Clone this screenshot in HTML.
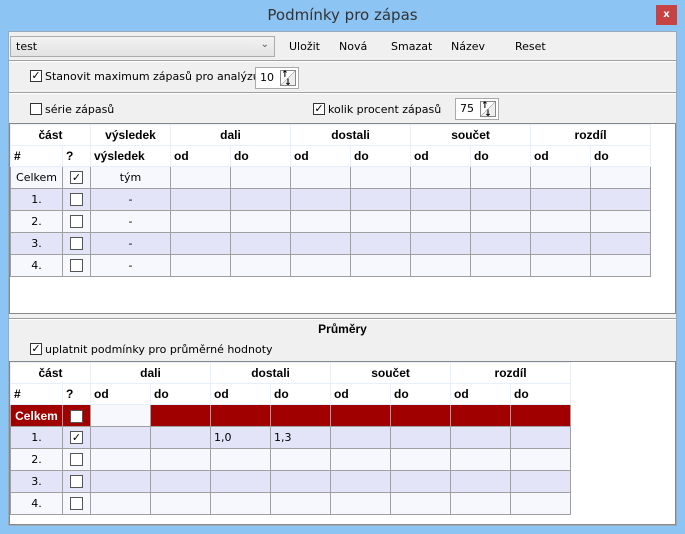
<!DOCTYPE html>
<html><head><meta charset="utf-8"><style>
*{margin:0;padding:0;box-sizing:border-box}
body{width:685px;height:534px;background:#8cc4f4;font-family:"DejaVu Sans","Liberation Sans",sans-serif;font-size:11px;color:#000;position:relative;overflow:hidden}
.a{position:absolute}
.win{left:8px;top:31px;width:669px;height:495px;background:#f0f0f0;border:1px solid #9ab}
.title{left:0;top:6px;width:685px;text-align:center;font-size:15px;color:#333;font-family:"DejaVu Sans",sans-serif}
.x{left:656px;top:5px;width:21px;height:20px;background:#c74343;color:#fff;font-size:10px;text-align:center;line-height:20px;font-weight:bold}
.hr{height:2px;border-top:1px solid #a0a0a0;border-bottom:1px solid #fff;left:9px;width:667px}
.cb{width:12px;height:12px;border:1px solid #333;background:#fff;font-size:11px;line-height:10px;text-align:center;font-weight:bold}
.spin{width:44px;height:22px;background:#fff;border:1px solid #aaa;padding:3px 4px;font-size:11px}
.spin span{position:absolute;right:2px;top:2px;width:16px;height:16px;border:1px solid #888;background:linear-gradient(135deg,#fff 48%,#888 50%,#eee 52%);font-size:9px;line-height:8px;font-weight:bold}
table{position:absolute;border-collapse:collapse;table-layout:fixed}
td{border:1px solid #a0a0a0;padding:0 3px;white-space:nowrap;overflow:hidden;text-align:center}
tr.h td{border:1px solid #e6f0fc;background:#fff;font-weight:bold;font-family:"Liberation Sans",sans-serif;font-size:12px}
tr.h2 td{text-align:left}
tr.w td{background:#f7f8fd}
tr.b td{background:#e4e4f8}
.ic{display:inline-block;width:13px;height:13px;border:1px solid #555;background:#fff;vertical-align:middle;font-size:11px;line-height:11px;font-weight:bold}
.box{border:1px solid #888;background:#fff}
</style></head><body>
<div class="a title">Podmínky pro zápas</div>
<div class="a x">x</div>
<div class="a win"></div>
<div class="a" style="left:10px;top:36px;width:265px;height:21px;border:1px solid #acacac;background:linear-gradient(#f2f2f2,#e3e3e3);padding:3px 5px">test<span style="position:absolute;right:5px;top:2px;color:#555;font-size:10px">⌄</span></div>
<div class="a" style="left:289px;top:40px">Uložit</div>
<div class="a" style="left:339px;top:40px">Nová</div>
<div class="a" style="left:391px;top:40px">Smazat</div>
<div class="a" style="left:451px;top:40px">Název</div>
<div class="a" style="left:515px;top:40px">Reset</div>
<div class="a hr" style="top:60px"></div>
<div class="a cb" style="left:30px;top:70px">✓</div>
<div class="a" style="left:45px;top:70px">Stanovit maximum zápasů pro analýzu</div>
<div class="a spin" style="left:255px;top:67px">10<span>↑<br>&nbsp;↓</span></div>
<div class="a hr" style="top:92px"></div>
<div class="a cb" style="left:30px;top:103px"></div>
<div class="a" style="left:45px;top:103px">série zápasů</div>
<div class="a cb" style="left:313px;top:103px">✓</div>
<div class="a" style="left:328px;top:103px">kolik procent zápasů</div>
<div class="a spin" style="left:455px;top:98px">75<span>↑<br>&nbsp;↓</span></div>
<div class="a box" style="left:9px;top:123px;width:667px;height:191px"></div>
<table style="left:10px;top:124px;width:640px">
<colgroup><col style="width:52px"><col style="width:28px"><col style="width:80px"><col style="width:60px"><col style="width:60px"><col style="width:60px"><col style="width:60px"><col style="width:60px"><col style="width:60px"><col style="width:60px"><col style="width:60px"></colgroup>
<tr class="h" style="height:21px"><td colspan="2">část</td><td>výsledek</td><td colspan="2">dali</td><td colspan="2">dostali</td><td colspan="2">součet</td><td colspan="2">rozdíl</td></tr>
<tr class="h h2" style="height:21px"><td>#</td><td>?</td><td>výsledek</td><td>od</td><td>do</td><td>od</td><td>do</td><td>od</td><td>do</td><td>od</td><td>do</td></tr>
<tr class="w" style="height:22px"><td>Celkem</td><td><span class="ic">✓</span></td><td>tým</td><td></td><td></td><td></td><td></td><td></td><td></td><td></td><td></td></tr>
<tr class="b" style="height:22px"><td>1.</td><td><span class="ic"></span></td><td>-</td><td></td><td></td><td></td><td></td><td></td><td></td><td></td><td></td></tr>
<tr class="w" style="height:22px"><td>2.</td><td><span class="ic"></span></td><td>-</td><td></td><td></td><td></td><td></td><td></td><td></td><td></td><td></td></tr>
<tr class="b" style="height:22px"><td>3.</td><td><span class="ic"></span></td><td>-</td><td></td><td></td><td></td><td></td><td></td><td></td><td></td><td></td></tr>
<tr class="w" style="height:22px"><td>4.</td><td><span class="ic"></span></td><td>-</td><td></td><td></td><td></td><td></td><td></td><td></td><td></td><td></td></tr>
</table>
<div class="a hr" style="top:318px"></div>
<div class="a" style="left:0;top:322px;width:685px;text-align:center;font-weight:bold;font-family:'Liberation Sans',sans-serif;font-size:12px">Průměry</div>
<div class="a cb" style="left:30px;top:343px">✓</div>
<div class="a" style="left:45px;top:343px">uplatnit podmínky pro průměrné hodnoty</div>
<div class="a box" style="left:9px;top:361px;width:667px;height:164px"></div>
<table style="left:10px;top:362px;width:560px">
<colgroup><col style="width:52px"><col style="width:28px"><col style="width:60px"><col style="width:60px"><col style="width:60px"><col style="width:60px"><col style="width:60px"><col style="width:60px"><col style="width:60px"><col style="width:60px"></colgroup>
<tr class="h" style="height:21px"><td colspan="2">část</td><td colspan="2">dali</td><td colspan="2">dostali</td><td colspan="2">součet</td><td colspan="2">rozdíl</td></tr>
<tr class="h h2" style="height:21px"><td>#</td><td>?</td><td>od</td><td>do</td><td>od</td><td>do</td><td>od</td><td>do</td><td>od</td><td>do</td></tr>
<tr style="height:22px;background:#a00000;color:#fff;font-weight:bold;font-family:'Liberation Sans',sans-serif;font-size:12px"><td style="padding:0 2px">Celkem</td><td><span class="ic"></span></td><td style="background:#f7f8fd;border:1px dotted #000"></td><td></td><td></td><td></td><td></td><td></td><td></td><td></td></tr>
<tr class="b" style="height:22px"><td>1.</td><td><span class="ic">✓</span></td><td></td><td></td><td style="text-align:left">1,0</td><td style="text-align:left">1,3</td><td></td><td></td><td></td><td></td></tr>
<tr class="w" style="height:22px"><td>2.</td><td><span class="ic"></span></td><td></td><td></td><td></td><td></td><td></td><td></td><td></td><td></td></tr>
<tr class="b" style="height:22px"><td>3.</td><td><span class="ic"></span></td><td></td><td></td><td></td><td></td><td></td><td></td><td></td><td></td></tr>
<tr class="w" style="height:22px"><td>4.</td><td><span class="ic"></span></td><td></td><td></td><td></td><td></td><td></td><td></td><td></td><td></td></tr>
</table>
</body></html>
